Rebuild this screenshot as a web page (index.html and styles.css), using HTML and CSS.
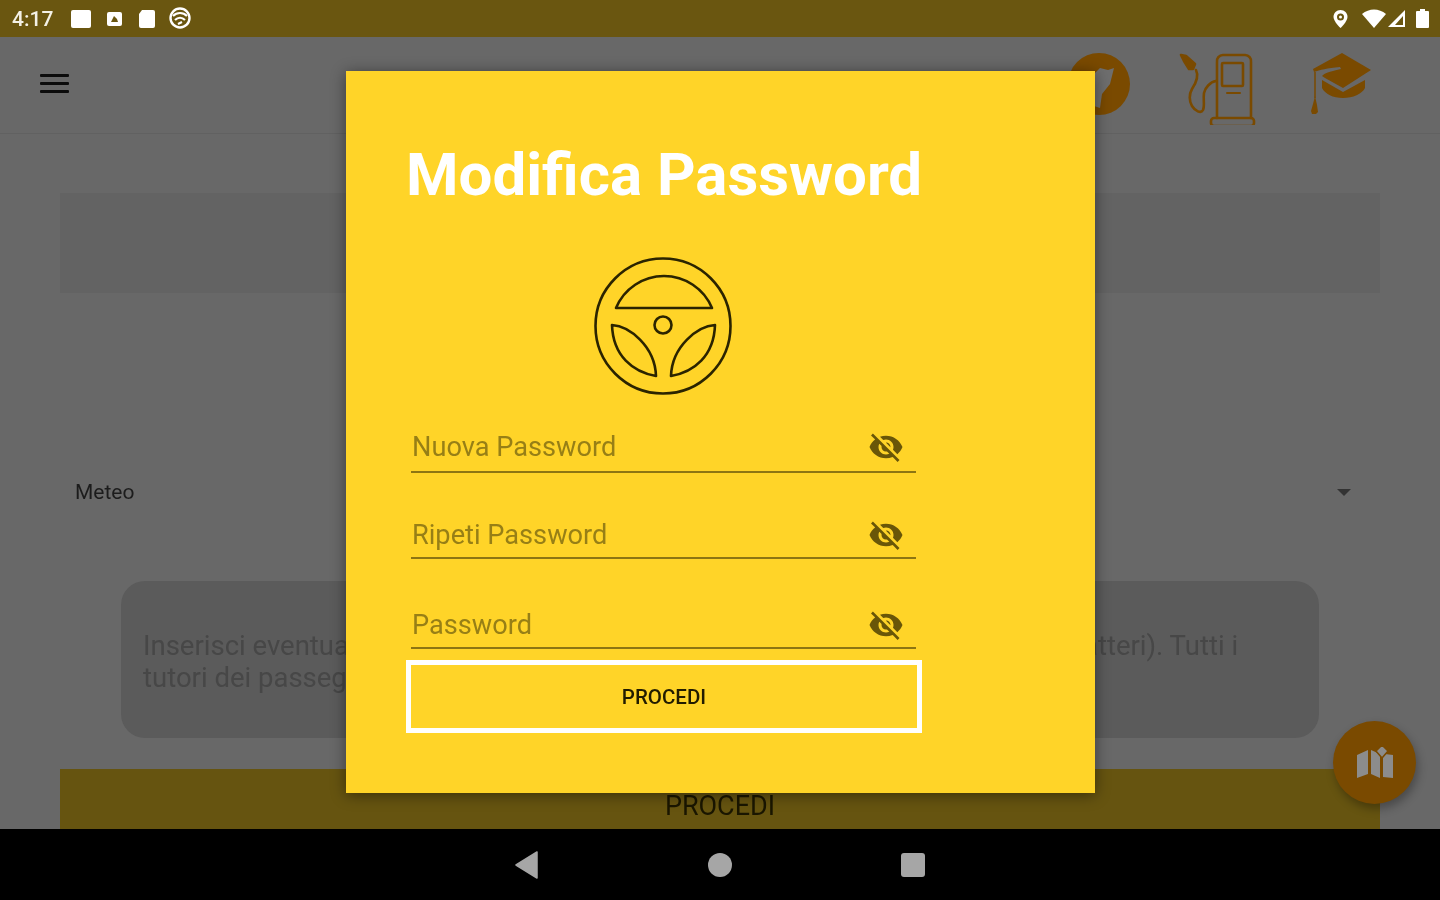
FILE: index.html
```html
<!DOCTYPE html>
<html>
<head>
<meta charset="utf-8"/>
<title>Modifica Password</title>
<link rel="stylesheet" href="styles.css">
</head>
<body>

<svg class="defs" width="0" height="0">
  <symbol id="eye-off" viewBox="0 0 24 24">
    <path d="M12 7c2.76 0 5 2.24 5 5 0 .65-.13 1.26-.36 1.83l2.92 2.92c1.51-1.26 2.7-2.89 3.43-4.75-1.73-4.39-6-7.5-11-7.5-1.4 0-2.74.25-3.98.7l2.16 2.16C10.74 7.13 11.35 7 12 7zM2 4.27l2.28 2.28.46.46C3.08 8.3 1.78 10.02 1 12c1.73 4.39 6 7.5 11 7.5 1.55 0 3.03-.3 4.38-.84l.42.42L19.73 22 21 20.73 3.27 3 2 4.27zM7.53 9.8l1.55 1.55c-.05.21-.08.43-.08.65 0 1.66 1.34 3 3 3 .22 0 .44-.03.65-.08l1.55 1.55c-.67.33-1.41.53-2.2.53-2.76 0-5-2.24-5-5 0-.79.2-1.53.53-2.2zm4.31-.78l3.15 3.15.02-.16c0-1.66-1.34-3-3-3l-.17.01z"/>
  </symbol>
</svg>

<div id="screen">

  <div class="statusbar">
    <span class="clock">4:17</span>
    <svg class="status-left" width="124" height="26" viewBox="71 6 124 26">
      <rect x="71" y="10" width="20" height="18" rx="2" fill="#fff"/>
      <rect x="107" y="12" width="15" height="14" rx="2" fill="#fff"/>
      <path d="M111 22l3-6 3 3 1 3z" fill="#6a5610"/>
      <path d="M142 10h11a2 2 0 0 1 2 2v14a2 2 0 0 1-2 2h-12a2 2 0 0 1-2-2V14z" fill="#fff"/>
      <circle cx="180" cy="18" r="9.5" fill="none" stroke="#fff" stroke-width="2.4"/>
      <path d="M173 16c4-4 10-4 14 0M175 20c3-3 7-3 10 0M178 24l4-2" fill="none" stroke="#fff" stroke-width="2.2"/>
    </svg>
    <svg class="status-right" width="100" height="26" viewBox="1330 6 100 26">
      <path d="M1340.500 10c-4 0-7 3-7 7 0 4.500 7 11 7 11s7-6.500 7-11c0-4-3-7-7-7z" fill="#fff"/>
      <circle cx="1340.500" cy="17" r="3.500" fill="#6a5610"/>
      <circle cx="1340.500" cy="17" r="1.500" fill="#fff"/>
      <path d="M1362 14c7-6 17-6 24 0l-12 14z" fill="#fff"/>
      <path d="M1388 27l17-17v17zM1395 25h8v-9z" fill="#fff" fill-rule="evenodd"/>
      <path d="M1420 11v-2h5v2h3a1 1 0 0 1 1 1v15a1 1 0 0 1-1 1h-11a1 1 0 0 1-1-1V12a1 1 0 0 1 1-1z" fill="#fff"/>
    </svg>
  </div>

  <div class="toolbar">
    <div class="hamburger"><span></span><span></span><span></span></div>
    <div class="actions">
      <svg width="80" height="80" viewBox="1059 45 80 80">
        <circle cx="1099" cy="84" r="31" fill="#7a4a00"/>
        <path d="M1114 68l-6 2-8-2-8 8 2 30 6 2 2-14 8-10z" fill="#6e6e6e"/>
      </svg>
      <svg width="80" height="80" viewBox="1177 45 80 80" fill="none" stroke="#7a4a00" stroke-width="2.600" stroke-linecap="round" stroke-linejoin="round">
        <path d="M1217 118V62a6 6 0 0 1 6-7h22a6 6 0 0 1 6 7v56"/>
        <rect x="1222" y="63" width="21" height="23" rx="1"/>
        <path d="M1227 93h13" stroke-width="2"/>
        <rect x="1211" y="118" width="43" height="8" rx="3"/>
        <path d="M1181 55l5 1 9 8-2 5-4 0-5-8z" fill="#7a4a00"/>
        <path d="M1196 70c3 6 0 13-4 19-3 5-3 12 0 17 3 5 9 8 11 4 2-5 0-10 1-17 1-5 6-11 12-12"/>
      </svg>
      <svg width="80" height="80" viewBox="1295 45 80 80">
        <path d="M1342 53l29 17-28 18-18-10-3-2c3-3 6-4 19-7l-1-2c-13 1-20 3-26 5l-1-3z" fill="#7a4a00"/>
        <path d="M1322 80l21 12 22-12v8c-3 6-12 10-22 10-10 0-18-4-21-10z" fill="#7a4a00"/>
        <path d="M1315 72v26" stroke="#7a4a00" stroke-width="1.500" fill="none"/>
        <path d="M1315 96l2 9 1 7-2 2h-4l-1-3 2-7z" fill="#7a4a00"/>
      </svg>
    </div>
  </div>

  <div class="content">
    <div class="banner"></div>
    <div class="select-row">
      <span>Meteo</span>
      <i class="caret"></i>
    </div>
    <p class="note">Inserisci eventuali informazioni utili per il tuo viaggio (al massimo di 1000 caratteri). Tutti i tutori dei passeggeri potranno leggerle</p>
    <button class="submit">PROCEDI</button>
  </div>

  <div class="navbar">
    <svg width="24" height="28" viewBox="0 0 24 28"><path d="M22 1v26L1 14z" fill="#a6a6a6" stroke="#a6a6a6" stroke-linejoin="round" stroke-width="1.500"/></svg>
    <i class="nav-home"></i>
    <i class="nav-recent"></i>
  </div>

  <div class="fab">
    <svg width="40" height="34" viewBox="1355 746 40 34">
      <path d="M1357 755l11-5v24l-11 4zM1371 750l9 4v24l-9-4zM1383 754l2 0 8 1v23l-10-1z" fill="#8c8c8c"/>
      <path d="M1382 745l6 6-6 7-6-7z" fill="#8c8c8c" stroke="#7a4a00" stroke-width="1.500"/>
    </svg>
  </div>

  <div class="dialog">
    <h1>Modifica Password</h1>
    <svg class="wheel" width="140" height="140" viewBox="0 0 140 140" fill="none" stroke="#2b2400" stroke-width="2.600" stroke-linejoin="round">
      <circle cx="70" cy="70" r="67.500"/>
      <path d="M23 52A52 52 0 0 1 119 52z"/>
      <circle cx="70" cy="69" r="8.500"/>
      <path d="M19 69C36 70 62 90 63 120 40 116 20 100 19 69z"/>
      <path d="M122 69C105 70 79 90 78 120 101 116 121 100 122 69z"/>
    </svg>
    <div class="field"><span>Nuova Password</span><svg class="eye"><use href="#eye-off"/></svg></div>
    <div class="field"><span>Ripeti Password</span><svg class="eye"><use href="#eye-off"/></svg></div>
    <div class="field"><span>Password</span><svg class="eye"><use href="#eye-off"/></svg></div>
    <button class="proceed">PROCEDI</button>
  </div>

</div>

</body>
</html>
```

FILE: styles.css
```css
body {
  font-family: Roboto, "Liberation Sans", sans-serif;
  margin: 0px;
  padding: 0px;
  background: #000;
}

.defs {
  display: block;
  height: 0;
}

#screen {
  position: relative;
  display: flex;
  flex-direction: column;
  width: 1440px;
  height: 900px;
  overflow: hidden;
  background: #686868;
  filter: blur(0.5px); /* the capture is soft */
}

/* status bar */
.statusbar {
  display: flex;
  align-items: center;
  flex: 0 0 37px;
  background: #6a5610;
  color: #fff;
  padding-left: 12px;
}

.clock {
  font-size: 21px;
  width: 59px;
  font-weight: 500;
  color: #f4f1e6;
}

.status-right {
  margin-left: auto;
  margin-right: 10px;
}

/* top bar, under the scrim */
.toolbar {
  display: flex;
  align-items: center;
  flex: 0 0 96px;
  padding: 0 65px 0 40px;
  border-bottom: 1px solid #616161;
}

.hamburger {
  display: flex;
  flex-direction: column;
  gap: 5px;
  width: 29px;
  margin-top: -4px;
}

.hamburger span {
  display: block;
  height: 3px;
  background: #0c0c0c;
  border-radius: 1px;
}

.actions {
  display: flex;
  gap: 38px;
  margin-left: auto;
}

/* form behind the dialog */
.content {
  display: flex;
  flex-direction: column;
  flex: 1;
  min-height: 0;
  padding: 59px 60px 0;
}

.banner {
  flex: 0 0 100px;
  background: #636363;
}

.select-row {
  display: flex;
  align-items: center;
  justify-content: space-between;
  margin-top: 187px;
  padding: 0 29px 0 15px;
  font-size: 21px;
  line-height: 24px;
  color: #1c1c1c;
}

.caret {
  width: 0;
  height: 0;
  border-left: 7px solid transparent;
  border-right: 7px solid transparent;
  border-top: 7px solid #333;
}

.note {
  flex: 0 0 auto;
  box-sizing: border-box;
  height: 157px;
  margin: 77px 61px 31px;
  padding: 49px 70px 0 22px;
  border-radius: 24px;
  background: #5b5b5b;
  color: #474747;
  font-size: 27.500px;
  line-height: 32px;
}

.submit {
  flex: 0 0 60px;
  border: 0;
  padding: 14px 0 0;
  background: #665410;
  color: #1a1600;
  font-family: inherit;
  font-size: 27px;
  line-height: 46px;
  align-self: stretch;
}

/* android buttons */
.navbar {
  display: flex;
  align-items: center;
  justify-content: center;
  gap: 169px;
  flex: 0 0 71px;
  background: #000;
}

.nav-home {
  width: 24px;
  height: 24px;
  border-radius: 50%;
  background: #a6a6a6;
}

.nav-recent {
  width: 24px;
  height: 24px;
  border-radius: 3px;
  background: #a6a6a6;
}

.fab {
  position: absolute;
  left: 1333px;
  top: 721px;
  width: 83px;
  height: 83px;
  display: flex;
  align-items: center;
  justify-content: center;
  border-radius: 50%;
  background: #7a4a00;
  box-shadow: 2px 5px 10px rgba(0, 0, 0, 0.3);
}

/* dialog */
.dialog {
  position: absolute;
  left: 346px;
  top: 71px;
  box-sizing: border-box;
  width: 749px;
  height: 722px;
  padding: 71px 0 0 60px;
  background: #ffd428;
  box-shadow: 0 2px 14px rgba(0, 0, 0, 0.45);
}

.dialog h1 {
  margin: 0;
  width: 516px;
  font-size: 60px;
  line-height: 66px;
  font-weight: 700;
  color: #fff;
  white-space: nowrap;
}

.wheel {
  display: block;
  margin: 48px 0 26px 187px;
}

.field {
  display: flex;
  align-items: center;
  justify-content: space-between;
  box-sizing: border-box;
  width: 505px;
  height: 51px;
  margin: 0 0 35px 5px;
  padding: 1px 12px 0 1px;
  border-bottom: 2px solid #8d7512;
  font-size: 27.200px;
  color: #977f16;
}

.field:nth-of-type(2) {
  margin-bottom: 39px;
  padding-top: 5px;
}

.field:nth-of-type(3) {
  margin-bottom: 11px;
  padding-top: 4px;
}

.eye {
  width: 36px;
  height: 36px;
  fill: #695608;
}

.proceed {
  display: block;
  box-sizing: border-box;
  width: 516px;
  height: 73px;
  padding: 0;
  border: 5px solid #fff;
  background: transparent;
  color: #221c00;
  font-family: inherit;
  font-size: 20.500px;
  font-weight: 500;
}
```
